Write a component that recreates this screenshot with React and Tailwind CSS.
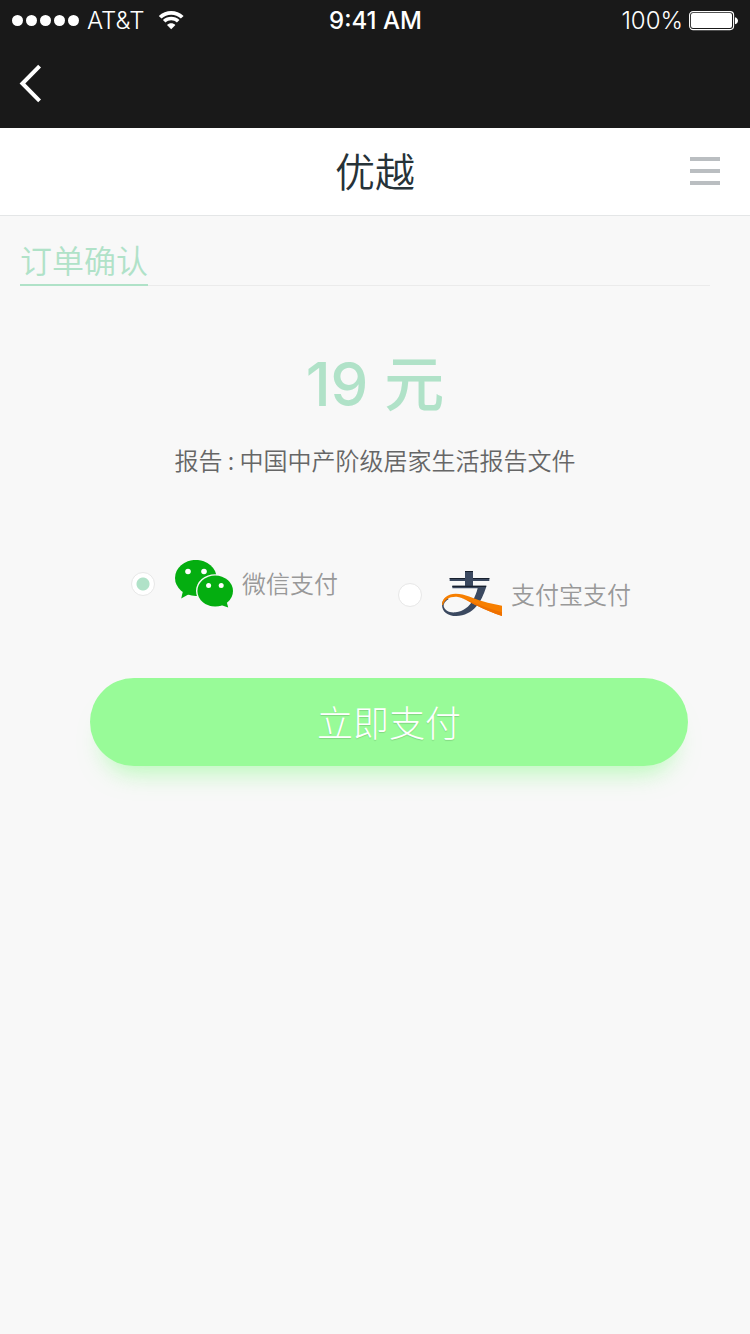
import React from "react";

function SignalDots() {
  return (
    <div className="flex gap-[3px]" aria-hidden="true">
      {[0, 1, 2, 3, 4].map((n) => (
        <span key={n} className="size-[11px] rounded-full bg-white" />
      ))}
    </div>
  );
}

function WifiIcon() {
  return (
    <svg className="h-[19px] w-[26px]" viewBox="0 0 26 19" fill="#fff" aria-hidden="true">
      <path d="M0.8 4.9C7.8-1.6 18.6-1.6 25.6 4.9L22.9 7.6C17.4 2.4 9 2.4 3.5 7.6Z" />
      <path d="M4.9 9c4.6-4.3 12-4.3 16.6 0l-2.6 2.6c-3.2-3-8.2-3-11.4 0Z" />
      <path d="M13.2 18.2 9 13.9c2.3-2.1 6.1-2.1 8.4 0Z" />
    </svg>
  );
}

function BatteryIcon() {
  return (
    <svg className="h-5 w-[50px]" viewBox="0 0 50 20" aria-hidden="true">
      <rect x="0.6" y="0.6" width="44" height="18" rx="3.5" fill="none" stroke="#fff" strokeWidth="1.1" />
      <rect x="2" y="2.1" width="41" height="15" rx="2" fill="#fff" />
      <path d="M46 6.2c4 1 4 6 0 7Z" fill="#fff" />
    </svg>
  );
}

function WeChatIcon() {
  return (
    <svg className="h-12 w-[58px]" viewBox="0 0 58 48" aria-hidden="true">
      <g fill="#04ae10">
        <ellipse cx="20.8" cy="17.9" rx="20.8" ry="18" />
        <path d="M8.2 30 6.2 38.4 15 33.6Z" />
      </g>
      <ellipse cx="40.2" cy="31" rx="19.2" ry="16.8" fill="#f8f8f8" />
      <g fill="#04ae10">
        <ellipse cx="40.2" cy="31" rx="17.8" ry="15.5" />
        <path d="M46 45 53.2 47.4 51.6 41.5Z" />
      </g>
      <g fill="#fff">
        <circle cx="13" cy="11.5" r="2.8" />
        <circle cx="29" cy="11.5" r="2.8" />
        <circle cx="33.6" cy="25.5" r="2.5" />
        <circle cx="46.2" cy="25.5" r="2.5" />
      </g>
    </svg>
  );
}

function AlipayIcon() {
  return (
    <svg className="mb-[3px] h-[45px] w-[60px]" viewBox="0 0 180 135" aria-hidden="true">
      <path d="M69 0h24v21h49v9H93v14h40v3C125 70 116 92 104 105 88 124 67 135 43 135 17 135 0 122 0 101 0 92 5 84 13 79L20 84C9 91 4 98 5 106 8 119 22 126 41 124 64 121 82 106 92 89 99 78 103 66 107 52H31v-8h38V30H23v-9h46Z" fill="#3b4960" />
      <path d="M69 0h24v3H69ZM23 21h46v3H23ZM93 21h49v3H93ZM31 44h102l-1 4H31Z" fill="#18202d" />
      <path d="M0 101C1 80 18 68 41 68 70 68 93 82 122 91 143 97 161 101 180 104V135C153 127 130 116 107 105 84 94 64 79 44 77 22 76 7 86 3 103Z" fill="#f77f00" />
      <path d="M107 105C88 96 74 86 58 80 84 88 122 108 180 124V135C153 127 130 116 107 105Z" fill="#ef7000" />
    </svg>
  );
}

function PayOption({ label, icon, className, defaultChecked }) {
  return (
    <label className={"flex h-12 items-center " + className}>
      <input
        type="radio"
        name="payment"
        defaultChecked={defaultChecked}
        className="mr-5 size-6 shrink-0 appearance-none rounded-full border border-[#e8e8e8] bg-white bg-clip-padding checked:bg-[radial-gradient(circle,#b0e2c8_6px,#fff_7px)]"
      />
      {icon}
      <span className="ml-[9px] whitespace-nowrap pb-0.5 font-['Noto_Sans_CJK_SC',sans-serif] text-2xl font-[350] text-[#999]">{label}</span>
    </label>
  );
}

export default function App() {
  return (
    <div className="min-h-screen bg-[#f8f8f8] font-['Inter','Noto_Sans_CJK_SC',sans-serif]">
      <div className="bg-[#191919] text-white">
        <div className="grid h-10 grid-cols-[1fr_auto_1fr] items-center pl-3 pr-[11px] pt-px text-2xl">
          <div className="flex items-center">
            <SignalDots />
            <span className="ml-2 mr-[14px] font-light">AT&amp;T</span>
            <WifiIcon />
          </div>
          <span className="font-medium">9:41 AM</span>
          <div className="flex items-center justify-end gap-[6px]">
            <span className="font-light">100%</span>
            <BatteryIcon />
          </div>
        </div>
        <nav className="flex h-22 items-center pl-[18px]">
          <button type="button" aria-label="返回">
            <svg className="h-10 w-6" viewBox="0 0 24 40" fill="none" stroke="#fff" strokeWidth="4" aria-hidden="true">
              <path d="M21.6 2.2 4.4 19.5 21.6 36.8" />
            </svg>
          </button>
        </nav>
      </div>

      <header className="grid h-22 grid-cols-[1fr_auto_1fr] items-center border-b border-[#e4e6e7] bg-white px-[30px] pb-0.5">
        <h1 className="col-start-2 pb-0.5 font-['Noto_Sans_CJK_SC',sans-serif] text-[40px] font-[350] leading-[60px] text-[#263238]">优越</h1>
        <button type="button" aria-label="菜单" className="flex flex-col gap-2 justify-self-end">
          <span className="h-1 w-[30px] bg-[#babec1]" />
          <span className="h-1 w-[30px] bg-[#babec1]" />
          <span className="h-1 w-[30px] bg-[#babec1]" />
        </button>
      </header>

      <main className="pt-5">
        <div className="ml-5 mr-10 flex border-b border-[#ebebeb]">
          <h2 className="-mb-px border-b-2 border-[#b0e2c8] pb-0.5 font-['Noto_Sans_CJK_SC',sans-serif] text-[32px] font-[350] leading-[46px] text-[#b0e2c8]">
            订单确认
          </h2>
        </div>

        <p className="mt-14 text-center text-[60px] font-medium leading-[84px] text-[#b0e2c8]">19 元</p>
        <p className="mt-4 text-center font-['Noto_Sans_CJK_SC',sans-serif] text-2xl font-[350] leading-9 text-[#666]">
          报告 : 中国中产阶级居家生活报告文件
        </p>

        <div role="radiogroup" aria-label="支付方式" className="mt-[82px] flex items-start justify-center gap-[60px] pl-3">
          <PayOption label="微信支付" icon={<WeChatIcon />} className="" defaultChecked />
          <PayOption label="支付宝支付" icon={<AlipayIcon />} className="mt-[11px]" />
        </div>

        <div className="mt-[59px] pl-[90px] pr-[62px]">
          <button
            type="button"
            className="h-22 w-full rounded-full bg-[#98fb98] pb-0.5 font-['Noto_Sans_CJK_SC',sans-serif] text-4xl font-light text-white shadow-[0_20px_24px_-14px_rgba(152,251,152,0.7)] [text-shadow:0_1px_1px_rgba(0,0,0,0.15)]"
          >
            立即支付
          </button>
        </div>
      </main>
    </div>
  );
}
